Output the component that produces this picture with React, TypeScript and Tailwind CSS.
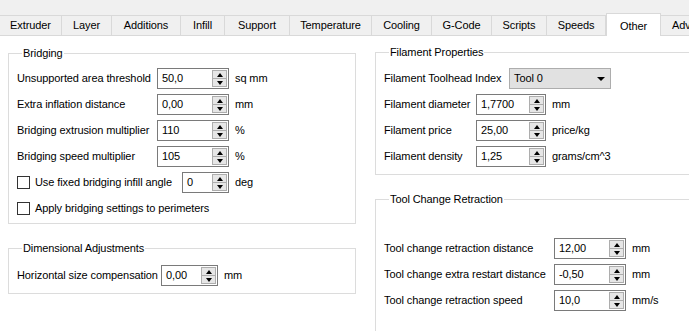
import React from "react";

const tabs: [string, number][] = [
  ["Extruder", 62],
  ["Layer", 50],
  ["Additions", 69],
  ["Infill", 44],
  ["Support", 65],
  ["Temperature", 82],
  ["Cooling", 60],
  ["G-Code", 60],
  ["Scripts", 55],
  ["Speeds", 59],
  ["Other", 55],
];

function Spin({ value, w }: { value: string; w: string }) {
  return (
    <div className={`flex h-[21px] shrink-0 border border-[#7a7a7a] bg-white ${w}`}>
      <span className="flex-1 pl-[4px] leading-[19px]">{value}</span>
      <div className="my-[1px] mr-[1px] flex w-[15px] flex-col border border-[#adadad] bg-[#e6e6e6]">
        <div className="flex flex-1 items-center justify-center border-b border-[#adadad]">
          <div className="h-0 w-0 border-x-[3.5px] border-b-[4px] border-x-transparent border-b-black" />
        </div>
        <div className="flex flex-1 items-center justify-center">
          <div className="h-0 w-0 border-x-[3.5px] border-t-[4px] border-x-transparent border-t-black" />
        </div>
      </div>
    </div>
  );
}

function Row({
  label,
  lw,
  value,
  sw,
  unit,
}: {
  label: string;
  lw: string;
  value: string;
  sw: string;
  unit: string;
}) {
  return (
    <div className="flex h-[21px] items-center">
      <span className={`shrink-0 whitespace-nowrap ${lw}`}>{label}</span>
      <Spin value={value} w={sw} />
      <span className="ml-[6px]">{unit}</span>
    </div>
  );
}

function Check() {
  return <div className="h-[13px] w-[13px] shrink-0 border border-[#333] bg-white" />;
}

export default function App() {
  return (
    <div
      className="flex h-[331px] w-[689px] flex-col overflow-hidden bg-[#f0f0f0] text-[11px] tracking-[-0.1px] text-black"
      style={{ fontFamily: '"Liberation Sans", Arial, sans-serif' }}
    >
      <div className="flex h-[35px] shrink-0 items-end">
        {tabs.map(([t, w]) =>
          t === "Other" ? (
            <div
              key={t}
              className="relative z-10 -mb-px flex h-[23px] shrink-0 items-start justify-center border-x border-t border-[#d9d9d9] bg-white pt-[4px]"
              style={{ width: w }}
            >
              {t}
            </div>
          ) : (
            <div
              key={t}
              className="flex h-[20px] shrink-0 items-center justify-center border-t border-r border-[#d9d9d9] bg-[#f0f0f0] pb-px"
              style={{ width: w }}
            >
              {t}
            </div>
          )
        )}
        <div className="flex h-[20px] w-[80px] shrink-0 items-center border-t border-[#d9d9d9] bg-[#f0f0f0] pb-px pl-[11px]">
          Advanced
        </div>
      </div>
      <div className="flex flex-1 gap-[19px] border-t border-[#d9d9d9] bg-white pl-[8px] pt-[10px]">
        <div className="flex w-[348px] shrink-0 flex-col gap-[17px]">
          <fieldset className="border border-[#dcdcdc] px-[8px] pb-[4px] pt-[8px]">
            <legend className="ml-[5px] px-[1px] leading-[14px]">Bridging</legend>
            <div className="flex flex-col gap-[5px]">
              <Row label="Unsupported area threshold" lw="w-[140px]" value="50,0" sw="w-[72px]" unit="sq mm" />
              <Row label="Extra inflation distance" lw="w-[140px]" value="0,00" sw="w-[72px]" unit="mm" />
              <Row label="Bridging extrusion multiplier" lw="w-[140px]" value="110" sw="w-[72px]" unit="%" />
              <Row label="Bridging speed multiplier" lw="w-[140px]" value="105" sw="w-[72px]" unit="%" />
              <div className="flex h-[21px] items-center">
                <Check />
                <span className="ml-[5px] w-[147px] shrink-0">Use fixed bridging infill angle</span>
                <Spin value="0" w="w-[47px]" />
                <span className="ml-[6px]">deg</span>
              </div>
              <div className="flex h-[21px] items-center">
                <Check />
                <span className="ml-[5px]">Apply bridging settings to perimeters</span>
              </div>
            </div>
          </fieldset>
          <fieldset className="border border-[#dcdcdc] px-[8px] pb-[7px] pt-[10px]">
            <legend className="ml-[5px] px-[1px] leading-[14px]">Dimensional Adjustments</legend>
            <Row
              label="Horizontal size compensation"
              lw="w-[144px]"
              value="0,00"
              sw="w-[57px]"
              unit="mm"
            />
          </fieldset>
        </div>
        <div className="flex w-[340px] shrink-0 flex-col gap-[17px]">
          <fieldset className="-mt-px border border-[#dcdcdc] px-[8px] pb-[7px] pt-[9px]">
            <legend className="ml-[5px] px-[1px] leading-[14px]">Filament Properties</legend>
            <div className="flex flex-col gap-[5px]">
              <div className="flex h-[21px] items-center">
                <span className="w-[125px] shrink-0">Filament Toolhead Index</span>
                <div className="flex h-[21px] w-[102px] items-center justify-between border border-[#adadad] bg-[#e1e1e1] pl-[4px] pr-[5px]">
                  <span>Tool 0</span>
                  <div className="h-0 w-0 border-x-[4px] border-t-[4px] border-x-transparent border-t-black" />
                </div>
              </div>
              <Row label="Filament diameter" lw="w-[92px]" value="1,7700" sw="w-[70px]" unit="mm" />
              <Row label="Filament price" lw="w-[92px]" value="25,00" sw="w-[70px]" unit="price/kg" />
              <Row label="Filament density" lw="w-[92px]" value="1,25" sw="w-[70px]" unit="grams/cm^3" />
            </div>
          </fieldset>
          <fieldset className="border border-[#dcdcdc] px-[8px] pb-[40px] pt-[32px]">
            <legend className="ml-[5px] px-[1px] leading-[14px]">Tool Change Retraction</legend>
            <div className="flex flex-col gap-[5px]">
              <Row label="Tool change retraction distance" lw="w-[170px]" value="12,00" sw="w-[72px]" unit="mm" />
              <Row label="Tool change extra restart distance" lw="w-[170px]" value="-0,50" sw="w-[72px]" unit="mm" />
              <Row label="Tool change retraction speed" lw="w-[170px]" value="10,0" sw="w-[72px]" unit="mm/s" />
            </div>
          </fieldset>
        </div>
      </div>
    </div>
  );
}
